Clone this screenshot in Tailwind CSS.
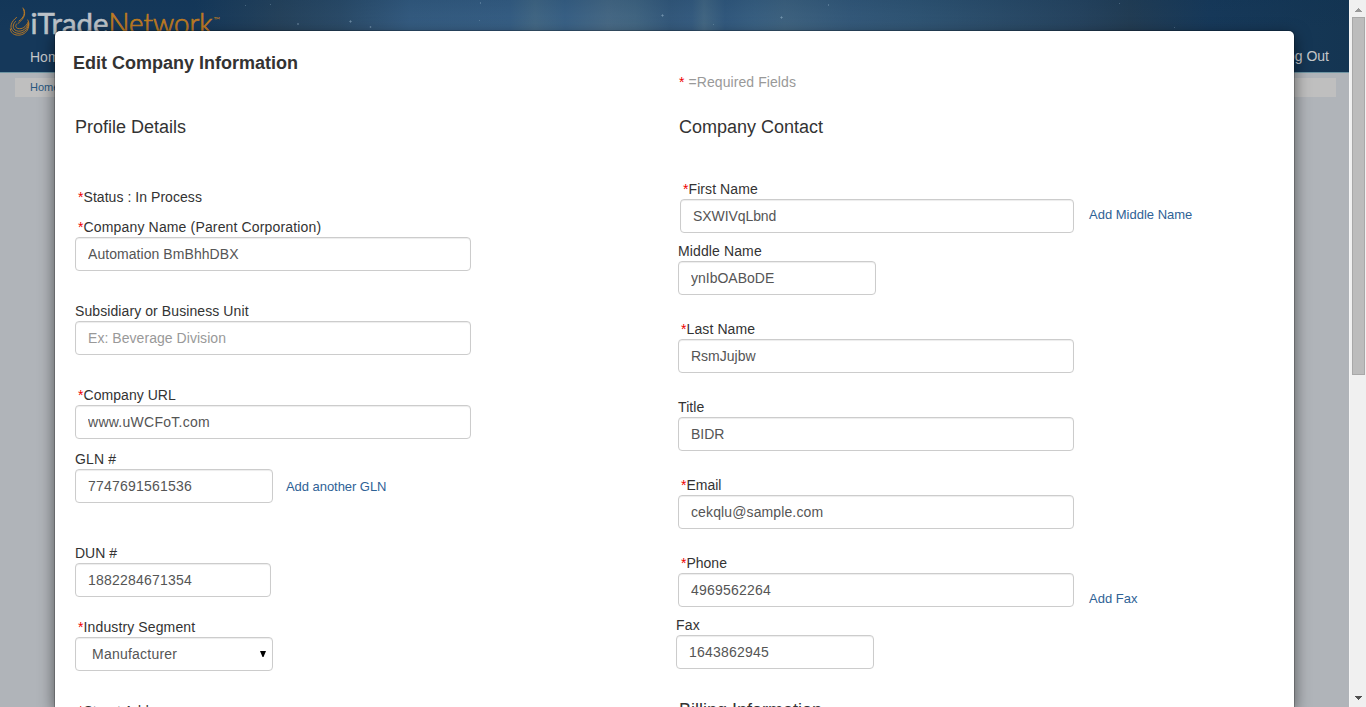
<!DOCTYPE html>
<html lang="en">
<head>
<meta charset="utf-8">
<title>iTradeNetwork</title>
<script src="https://cdn.jsdelivr.net/npm/@tailwindcss/browser@4"></script>
</head>
<body class="relative flex h-[707px] w-[1366px] overflow-hidden bg-[#b0b4b9] font-['Liberation_Sans',Arial,sans-serif] text-sm text-[#333]">
<div class="flex w-[1349px] flex-col">
  <header class="relative h-[73px] shrink-0 border-b border-[#6f95a3] bg-[linear-gradient(90deg,#15385a_0px,#15385a_195px,#27435c_280px,#2c4c69_340px,#365d82_410px,#386086_510px,#456a87_535px,#3b6388_565px,#4a6c88_608px,#456985_635px,#365b7e_670px,#385e82_692px,#466a86_704px,#345b80_725px,#3b6284_755px,#416582_785px,#365b7c_850px,#315675_920px,#2c4d6a_1000px,#27445f_1080px,#233d54_1130px,#17395a_1210px,#143552_1349px)]">
    <svg class="absolute left-0 top-0 h-[72px] w-[1349px]" viewBox="0 0 1349 72" fill="none">
      <defs>
        <linearGradient id="glow" x1="0" y1="0" x2="0" y2="1"><stop offset="0" stop-color="#0d3050" stop-opacity=".2"/><stop offset=".4" stop-color="#0d3050" stop-opacity="0"/></linearGradient>
      </defs>
      <rect width="1349" height="72" fill="url(#glow)"/>
      <g stroke="#a5c4d6" stroke-opacity=".3" stroke-width="1">
        <path d="M350.500 20v3M349 21.500h3M781.500 16v3M780 17.500h3M662.500 14v3M661 15.500h3M480.500 2v2M370.500 26v2M369.500 27h2M298 23v2M297 24h2M828.500 4v2M479 20.500h1M713 24.500h1M270 4.500h1M1119 3.500h1M245 5.500h1M1174 27.500h1"/>
      </g>
      <g stroke="#c27d22" stroke-width=".9" stroke-linecap="round">
        <path d="M23 8C26 14 23.500 17.500 19 21"/>
        <path d="M24 9.500C26.500 16 22 20 18 23.500"/>
        <path d="M10.300 29C10.500 37.800 28 38 28.800 25C29 23 28.500 21.500 27.800 20"/>
        <path d="M16.500 17.500C11 21.500 9.500 27 12.500 30.500C17 36 27.500 33.500 28.700 24"/>
        <path d="M15.500 21.500C12.500 24.500 12.500 28 15 30C19.500 33 26.500 30.500 28.500 23"/>
        <path d="M16.500 24C15 26.500 16 28 18 28.500C22 29.500 26 27 28.200 22"/>
      </g>
      <g class="font-[Lato,'Open_Sans',sans-serif]" font-size="28.500">
        <text x="30.500" y="34" fill="#bcc2c8" stroke="#bcc2c8" stroke-width=".55" font-weight="400" textLength="78" lengthAdjust="spacingAndGlyphs">iTrade</text>
        <text x="108.500" y="34" fill="#bd7b23" stroke="#bd7b23" stroke-width=".75" font-weight="300" textLength="104" lengthAdjust="spacingAndGlyphs">Network</text>
        <text x="213.500" y="22.500" fill="#bd7b23" font-size="8" textLength="6.500" lengthAdjust="spacingAndGlyphs">™</text>
      </g>
    </svg>
    <nav class="flex h-full items-end justify-between pb-[5px] pl-[30px] pr-5 text-sm leading-5 text-[#c6c8ca]">
      <a>Home</a><a class="pb-px">Log Out</a>
    </nav>
  </header>
  <div class="mx-[15px] mr-[13px] mt-[5px] h-[19px] bg-[#bfbfbf] pl-[15px] text-[11px] leading-[18px] text-[#285780]">Home</div>
</div>

<aside class="flex w-[17px] flex-col items-center border-l border-[#f5f5f5] bg-[#f0f0f0]">
  <div class="flex h-[17px] shrink-0 items-center"><svg class="mt-0.5 h-1 w-[7px]" viewBox="0 0 7 4" shape-rendering="crispEdges"><path d="M3 0h1v1h1v1h1v1h1v1H0V3h1V2h1V1h1z" fill="#999"/></svg></div>
  <div class="h-[358px] w-[13px] shrink-0 border border-[#a8a8a8] bg-[#bcbcbc]"></div>
  <svg class="mb-[7px] mt-auto h-1 w-[7px]" viewBox="0 0 7 4" shape-rendering="crispEdges"><path d="M0 0h7v1H6v1H5v1H4v1H3V3H2V2H1V1H0z" fill="#505050"/></svg>
</aside>

<main class="absolute left-[54px] top-[30px] h-[677px] w-[1241px] rounded-t-md border border-b-0 border-black/20 bg-white bg-clip-padding shadow-[0_5px_15px_rgba(0,0,0,0.5)]">
  <h1 class="h-[41px] pl-[18px] pt-5 text-lg font-bold leading-6">Edit Company Information</h1>
  <div class="flex h-[635px] overflow-hidden pl-5">
    <section class="w-[603px]">
      <h2 class="pt-[45px] text-lg leading-5">Profile Details</h2>
      <div class="flex flex-col pt-[50px] leading-5">
        <div class="pl-[3px] tracking-[0.05px]"><span class="text-[#e00]">*</span>Status : In Process</div>
        <label class="mt-2.5 pl-[3px] tracking-[0.15px]"><span class="text-[#e00]">*</span>Company Name (Parent Corporation)</label>
        <input class="h-[34px] w-[396px] rounded border border-[#ccc] px-3 tracking-[0.06px] text-[#555] shadow-[inset_0_1px_1px_rgba(0,0,0,0.075)]" value="Automation BmBhhDBX">
        <label class="mt-[30px] tracking-[0.09px]">Subsidiary or Business Unit</label>
        <input class="h-[34px] w-[396px] rounded border border-[#ccc] px-3 tracking-[0.05px] shadow-[inset_0_1px_1px_rgba(0,0,0,0.075)] placeholder:text-[#999]" placeholder="Ex: Beverage Division">
        <label class="mt-[30px] pl-[3px] tracking-[0.05px]"><span class="text-[#e00]">*</span>Company URL</label>
        <input class="h-[34px] w-[396px] rounded border border-[#ccc] px-3 tracking-[0.27px] text-[#555] shadow-[inset_0_1px_1px_rgba(0,0,0,0.075)]" value="www.uWCFoT.com">
        <label class="mt-2.5 tracking-[0.15px]">GLN #</label>
        <div class="flex items-center gap-[13px]">
          <input class="h-[34px] w-[198px] rounded border border-[#ccc] px-3 tracking-[0.21px] text-[#555] shadow-[inset_0_1px_1px_rgba(0,0,0,0.075)]" value="7747691561536">
          <a class="pt-0.5 text-[13px] tracking-[-0.05px] text-[#2f6296]">Add another GLN</a>
        </div>
        <label class="mt-10">DUN #</label>
        <input class="h-[34px] w-[196px] rounded border border-[#ccc] px-3 tracking-[0.21px] text-[#555] shadow-[inset_0_1px_1px_rgba(0,0,0,0.075)]" value="1882284671354">
        <label class="mt-5 pl-[3px] tracking-[0.12px]"><span class="text-[#e00]">*</span>Industry Segment</label>
        <div class="flex h-[34px] w-[198px] items-center justify-between rounded border border-[#ccc] pl-4 pr-1.5 tracking-[0.23px] text-[#555] shadow-[inset_0_1px_1px_rgba(0,0,0,0.075)]">
          <span>Manufacturer</span>
          <svg class="h-[6px] w-[6px]" viewBox="0 0 6 6"><path d="M0 0h6L3.500 6h-1z" fill="#000"/></svg>
        </div>
        <label class="mt-[30px] pl-[3px]"><span class="text-[#e00]">*</span>Street Address</label>
      </div>
    </section>

    <section class="w-[600px]">
      <div class="pl-px text-sm leading-5 tracking-[0.08px] text-[#999]"><span class="text-[#e00]">*</span> =Required Fields</div>
      <h2 class="pl-px pt-[25px] text-lg leading-5">Company Contact</h2>
      <div class="flex flex-col pt-[42px] leading-5">
        <label class="pl-[5px] tracking-[0.08px]"><span class="text-[#e00]">*</span>First Name</label>
        <div class="flex gap-[15px] pl-0.5">
          <input class="h-[34px] w-[394px] rounded border border-[#ccc] px-3 tracking-[-0.08px] text-[#555] shadow-[inset_0_1px_1px_rgba(0,0,0,0.075)]" value="SXWIVqLbnd">
          <a class="pt-1.5 text-[13px] text-[#2f6296]">Add Middle Name</a>
        </div>
        <label class="mt-2 tracking-[0.12px]">Middle Name</label>
        <input class="h-[34px] w-[198px] rounded border border-[#ccc] px-3 text-[#555] shadow-[inset_0_1px_1px_rgba(0,0,0,0.075)]" value="ynIbOABoDE">
        <label class="mt-6 pl-[3px] tracking-[0.1px]"><span class="text-[#e00]">*</span>Last Name</label>
        <input class="h-[34px] w-[396px] rounded border border-[#ccc] px-3 text-[#555] shadow-[inset_0_1px_1px_rgba(0,0,0,0.075)]" value="RsmJujbw">
        <label class="mt-6 tracking-[0.1px]">Title</label>
        <input class="h-[34px] w-[396px] rounded border border-[#ccc] px-3 text-[#555] shadow-[inset_0_1px_1px_rgba(0,0,0,0.075)]" value="BIDR">
        <label class="mt-6 pl-[3px]"><span class="text-[#e00]">*</span>Email</label>
        <input class="h-[34px] w-[396px] rounded border border-[#ccc] px-3 tracking-[0.12px] text-[#555] shadow-[inset_0_1px_1px_rgba(0,0,0,0.075)]" value="cekqlu@sample.com">
        <label class="mt-6 pl-[3px]"><span class="text-[#e00]">*</span>Phone</label>
        <div class="flex h-[34px] gap-[15px]">
          <input class="h-[34px] w-[396px] rounded border border-[#ccc] px-3 tracking-[0.21px] text-[#555] shadow-[inset_0_1px_1px_rgba(0,0,0,0.075)]" value="4969562264">
          <a class="pt-4 text-[13px] text-[#2f6296]">Add Fax</a>
        </div>
        <div class="-ml-0.5 mt-2 flex flex-col">
          <label class="tracking-[0.2px]">Fax</label>
          <input class="h-[34px] w-[198px] rounded border border-[#ccc] px-3 tracking-[0.21px] text-[#555] shadow-[inset_0_1px_1px_rgba(0,0,0,0.075)]" value="1643862945">
        </div>
        <h2 class="mt-[31px] pl-px text-lg leading-5">Billing Information</h2>
      </div>
    </section>
  </div>
</main>
</body>
</html>
